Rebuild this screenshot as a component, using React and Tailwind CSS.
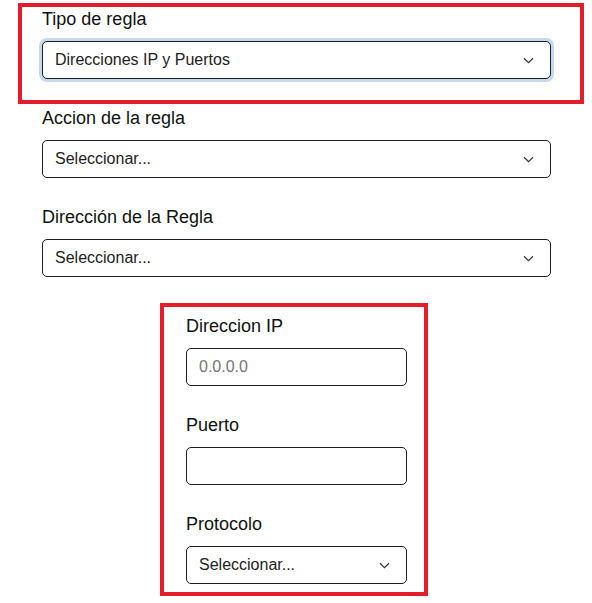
import React from "react";

function Chevron() {
  return (
    <svg width="11" height="7" viewBox="0 0 11 7" className="shrink-0">
      <path d="M1 1.2 L5.5 5.6 L10 1.2" fill="none" stroke="#3a3a3a" strokeWidth="1.3" />
    </svg>
  );
}

function FakeSelect({ value, focused }) {
  return (
    <div
      className={
        "h-[38px] border border-[#1e1e1e] rounded-[5px] pl-3 pr-[16px] flex items-center justify-between text-base text-[#222] bg-white " +
        (focused ? "shadow-[0_0_0_3px_#c6d9f4]" : "")
      }
    >
      <span>{value}</span>
      <Chevron />
    </div>
  );
}

function Label({ children }) {
  return <label className="block text-lg leading-[28px] text-[#111] mb-2">{children}</label>;
}

export default function App() {
  return (
    <div className="w-[592px] h-[603px] bg-white overflow-hidden font-['Liberation_Sans',Arial,sans-serif]">
      <div className="ml-[42px] w-[509px] pt-[5px]">
        <div className="relative mb-[25px]">
          <Label>Tipo de regla</Label>
          <FakeSelect value="Direcciones IP y Puertos" focused />
          <div className="absolute pointer-events-none border-4 border-[#e31e2a] top-[-2px] bottom-[-25px] left-[-24px] right-[-33px]" />
        </div>
        <div className="mb-[25px]">
          <Label>Accion de la regla</Label>
          <FakeSelect value="Seleccionar..." />
        </div>
        <div>
          <Label>Dirección de la Regla</Label>
          <FakeSelect value="Seleccionar..." />
        </div>
      </div>

      <div className="relative ml-[186px] w-[221px] mt-[35px]">
        <div className="mb-[25px]">
          <Label>Direccion IP</Label>
          <input
            readOnly
            placeholder="0.0.0.0"
            className="block w-full h-[38px] border border-[#1e1e1e] rounded-[5px] px-3 text-base text-[#222] placeholder:text-[#757575] outline-none"
          />
        </div>
        <div className="mb-[25px]">
          <Label>Puerto</Label>
          <input
            readOnly
            className="block w-full h-[38px] border border-[#1e1e1e] rounded-[5px] px-3 text-base text-[#222] outline-none"
          />
        </div>
        <div>
          <Label>Protocolo</Label>
          <FakeSelect value="Seleccionar..." />
        </div>
        <div className="absolute pointer-events-none border-4 border-[#e31e2a] top-[-9px] bottom-[-12px] left-[-26px] right-[-21px]" />
      </div>
    </div>
  );
}
